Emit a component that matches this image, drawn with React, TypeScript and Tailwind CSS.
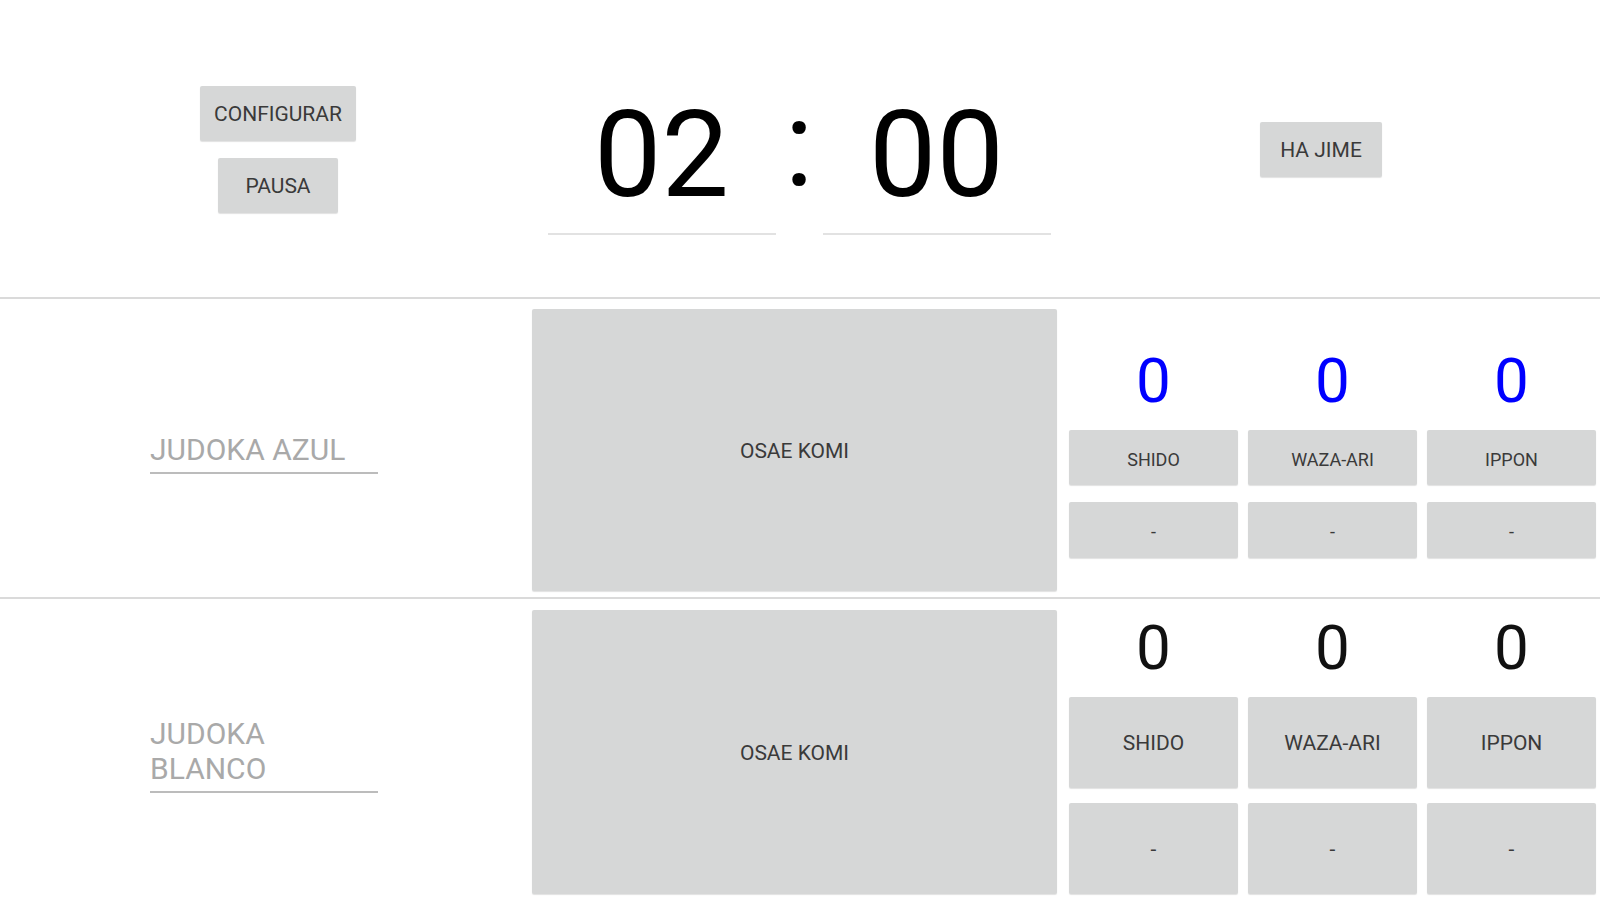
import React from "react";

const btn =
  "flex items-center justify-center rounded-[2px] bg-[#d6d7d7] pt-[3px] text-[#3a3a3a] font-normal shadow-[0_1px_1px_rgba(0,0,0,0.12)]";

function NameField({ label }: { label: string }) {
  return (
    <div className="w-[228px] border-b-2 border-[#bcbcbc] pt-[10px] pb-[5px] text-[30px] leading-[35px] text-[#a9a9a9]">
      {label}
    </div>
  );
}

function ScoreRow1() {
  const labels = ["SHIDO", "WAZA-ARI", "IPPON"];
  return (
    <div className="ml-[12px] flex flex-col pt-[51px]">
      <div className="grid grid-cols-[169px_169px_169px] gap-x-[10px]">
        {labels.map((l) => (
          <div key={l} className="h-[62px] text-center text-[62px] leading-[62px] text-[#0000ff]">
            0
          </div>
        ))}
      </div>
      <div className="mt-[18px] grid grid-cols-[169px_169px_169px] gap-x-[10px]">
        {labels.map((l) => (
          <div key={l} className={`${btn} h-[55px] text-[18px]`}>
            {l}
          </div>
        ))}
      </div>
      <div className="mt-[17px] grid grid-cols-[169px_169px_169px] gap-x-[10px]">
        {labels.map((l) => (
          <div key={l} className={`${btn} h-[56px] text-[18px]`}>
            -
          </div>
        ))}
      </div>
    </div>
  );
}

function ScoreRow2() {
  const labels = ["SHIDO", "WAZA-ARI", "IPPON"];
  return (
    <div className="ml-[12px] flex h-full flex-col pt-[18px] pb-[6px]">
      <div className="grid grid-cols-[169px_169px_169px] gap-x-[10px]">
        {labels.map((l) => (
          <div key={l} className="h-[62px] text-center text-[62px] leading-[62px] text-[#111111]">
            0
          </div>
        ))}
      </div>
      <div className="mt-[18px] grid flex-1 grid-cols-[169px_169px_169px] gap-x-[10px]">
        {labels.map((l) => (
          <div key={l} className={`${btn} text-[21px]`}>
            {l}
          </div>
        ))}
      </div>
      <div className="mt-[15px] grid flex-1 grid-cols-[169px_169px_169px] gap-x-[10px]">
        {labels.map((l) => (
          <div key={l} className={`${btn} text-[21px]`}>
            -
          </div>
        ))}
      </div>
    </div>
  );
}

export default function App() {
  return (
    <div className="flex h-[900px] w-[1600px] flex-col overflow-hidden bg-white font-['Roboto',sans-serif]">
      {/* Top section */}
      <div className="flex h-[297px] items-center">
        <div className="flex w-[556px] flex-col items-center justify-center gap-[17px]">
          <div className={`${btn} mt-[2px] h-[55px] w-[156px] text-[21px]`}>CONFIGURAR</div>
          <div className={`${btn} h-[55px] w-[120px] text-[21px]`}>PAUSA</div>
        </div>
        <div className="flex w-[486px] justify-center">
          <div className="flex shrink-0 items-start">
            <div className="w-[228px] border-b-2 border-[#e2e2e2] pt-[33px] pb-[18px] text-center text-[120px] leading-none text-black">
              02
            </div>
            <div className="mt-[22px] w-[47px] text-center text-[120px] leading-none text-black">:</div>
            <div className="w-[228px] border-b-2 border-[#e2e2e2] pt-[33px] pb-[18px] text-center text-[120px] leading-none text-black">
              00
            </div>
          </div>
        </div>
        <div className="flex flex-1 justify-center">
          <div className={`${btn} mt-[2px] h-[55px] w-[122px] text-[21px]`}>HA JIME</div>
        </div>
      </div>
      <div className="h-[2px] bg-[#dadada]" />

      {/* Row 1 - Azul */}
      <div className="flex h-[298px]">
        <div className="flex w-[528px] items-center justify-center">
          <NameField label="JUDOKA AZUL" />
        </div>
        <div className="ml-[4px] pt-[10px] pb-[6px]">
          <div className={`${btn} h-full w-[525px] text-[21px]`}>OSAE KOMI</div>
        </div>
        <ScoreRow1 />
      </div>
      <div className="h-[2px] bg-[#dadada]" />

      {/* Row 2 - Blanco */}
      <div className="flex flex-1">
        <div className="flex w-[528px] items-center justify-center">
          <NameField label="JUDOKA BLANCO" />
        </div>
        <div className="ml-[4px] pt-[11px] pb-[6px]">
          <div className={`${btn} h-full w-[525px] text-[21px]`}>OSAE KOMI</div>
        </div>
        <ScoreRow2 />
      </div>
    </div>
  );
}
